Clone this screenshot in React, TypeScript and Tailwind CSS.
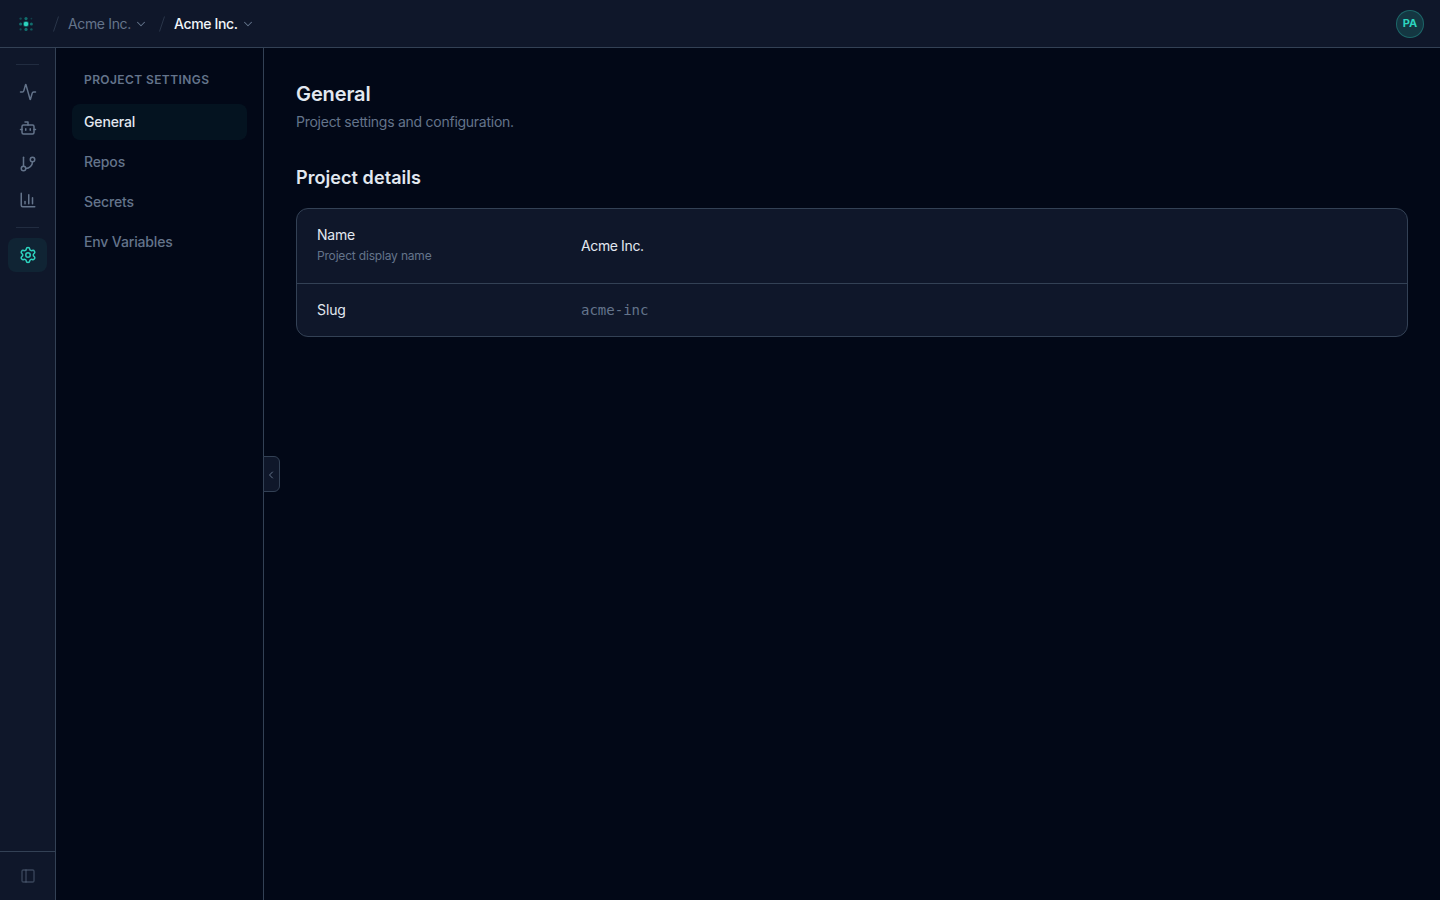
import { Activity, Bot, ChartColumn, ChevronDown, ChevronLeft, GitBranch, PanelLeft, Settings } from "lucide-react";

const NAV = [Activity, Bot, GitBranch, ChartColumn];

const LINKS = ["General", "Repos", "Secrets", "Env Variables"];

// dot radius and opacity, row by row
const DOTS = [
  [1.2, 0.35], [1.6, 0.55], [0.9, 0.25],
  [1.5, 0.55], [2.3, 1], [1.5, 0.55],
  [1.1, 0.35], [1.6, 0.55], [1.2, 0.4],
];

function Logo() {
  return (
    <svg width="20" height="20" viewBox="0 0 20 20" fill="#14b8a6">
      <circle cx="10" cy="10" r="3.2" opacity="0.3" />
      {DOTS.map(([r, o], i) => (
        <circle key={i} cx={4.6 + (i % 3) * 5.4} cy={4.6 + Math.floor(i / 3) * 5.4} r={r} opacity={o} fill={i === 4 ? "#2dd4bf" : "#14b8a6"} />
      ))}
    </svg>
  );
}

function Slash() {
  return (
    <svg width="8" height="18" viewBox="0 0 8 18" stroke="#334155" strokeOpacity="0.7" fill="none">
      <path d="M6.5 1.5 1.5 16.5" />
    </svg>
  );
}

function Header() {
  return (
    <header className="flex h-12 shrink-0 items-center border-b border-[#334155] bg-[#0f172a] px-4 text-sm">
      <Logo />
      <div className="ml-4 flex items-center">
        <Slash />
        <span className="ml-2 w-[63px] whitespace-nowrap tracking-[-0.35px] text-[#64748b]">Acme Inc.</span>
        <ChevronDown className="mt-px ml-[3px] text-[#64748b]" size={14} strokeWidth={1.8} />
      </div>
      <div className="ml-[10px] flex items-center">
        <Slash />
        <span className="ml-2 w-16 whitespace-nowrap font-medium tracking-[-0.35px] text-[#f1f5f9]">Acme Inc.</span>
        <ChevronDown className="mt-px ml-[3px] text-[#64748b]" size={14} strokeWidth={1.8} />
      </div>
      <div className="ml-auto flex size-7 items-center justify-center rounded-full border border-[#2dd4bf]/30 bg-[#2dd4bf]/[0.17] text-[11px] font-bold text-[#2dd4bf]">
        PA
      </div>
    </header>
  );
}

function Rail() {
  return (
    <aside className="flex w-14 shrink-0 flex-col border-r border-[#334155] bg-[#0f172a]">
      <div className="flex flex-col px-2 pt-4">
        <div className="mx-2 h-px bg-[#334155]/50" />
        <div className="mt-2.5 flex flex-col gap-0.5">
          {NAV.map((Icon, i) => (
            <button key={i} className="flex h-[34px] items-center justify-center rounded-lg text-[#64748b]">
              <Icon size={18} strokeWidth={2} />
            </button>
          ))}
        </div>
        <div className="mx-2 mt-2.5 h-px bg-[#334155]/50" />
        <button className="mt-2.5 flex h-[34px] items-center justify-center rounded-lg bg-[#2dd4bf]/[0.07] text-[#2dd4bf]">
          <Settings size={18} strokeWidth={2} />
        </button>
      </div>
      <div className="mt-auto flex h-[49px] items-center justify-center border-t border-[#334155] text-[#64748b]/50">
        <PanelLeft size={16} strokeWidth={2} />
      </div>
    </aside>
  );
}

function SettingsNav() {
  return (
    <nav className="relative w-52 shrink-0 border-r border-[#334155] px-4 pt-6">
      <h2 className="px-3 text-xs font-semibold tracking-[0.4px] text-[#64748b]">PROJECT SETTINGS</h2>
      <ul className="mt-4 flex flex-col gap-1">
        {LINKS.map((label, i) => (
          <li
            key={label}
            className={`flex h-9 items-center rounded-lg px-3 text-sm font-medium tracking-[-0.14px] ${i === 0 ? "bg-[#2dd4bf]/[0.06] text-[#e2e8f0]" : "text-[#64748b]"}`}
          >
            {label}
          </li>
        ))}
      </ul>
      <button className="absolute top-[408px] -right-[17px] flex h-9 w-[17px] items-center justify-center rounded-r-md border border-[#334155] bg-[#0f172a] text-[#64748b]">
        <ChevronLeft className="mt-px -ml-px shrink-0" size={12} />
      </button>
    </nav>
  );
}

export default function App() {
  return (
    <div className="flex h-screen flex-col overflow-hidden bg-[#020817] font-['Inter',sans-serif] text-[#e2e8f0]">
      <Header />
      <div className="flex min-h-0 flex-1">
        <Rail />
        <SettingsNav />
        <main className="flex-1 p-8">
          <h1 className="text-xl font-semibold leading-7 tracking-[-0.1px]">General</h1>
          <p className="mt-1 text-sm tracking-[-0.26px] text-[#64748b]">Project settings and configuration.</p>
          <h2 className="mt-8 text-lg font-semibold leading-7 tracking-[0.07px]">Project details</h2>
          <div className="mt-4 overflow-hidden rounded-xl border border-[#334155] bg-[#0f172a] text-sm">
            <div className="flex h-[75px] items-center border-b border-[#334155] px-5">
              <div className="w-[264px] pb-[3px]">
                <div className="tracking-[-0.2px]">Name</div>
                <div className="mt-[3px] text-xs tracking-[-0.18px] text-[#64748b]">Project display name</div>
              </div>
              <div className="tracking-[-0.38px]">Acme Inc.</div>
            </div>
            <div className="flex h-[52px] items-center px-5">
              <div className="w-[264px] tracking-[-0.1px]">Slug</div>
              <div className="font-['DejaVu_Sans_Mono',monospace] text-[#64748b]">acme-inc</div>
            </div>
          </div>
        </main>
      </div>
    </div>
  );
}
